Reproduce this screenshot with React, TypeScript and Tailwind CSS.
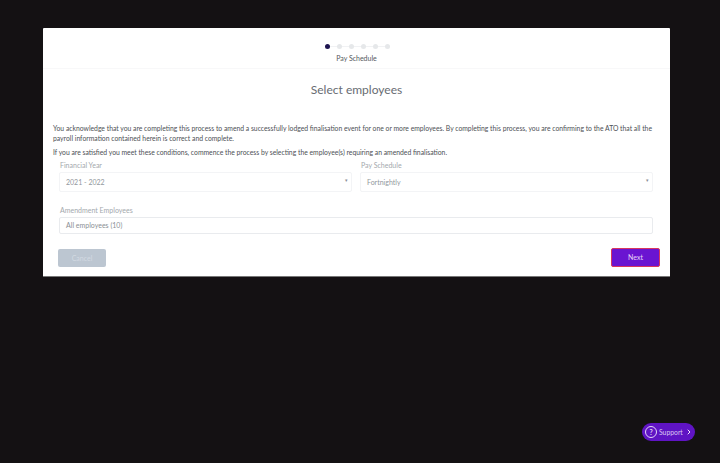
import React from "react";
import { ChevronRight } from "lucide-react";

const steps = [1, 2, 3, 4, 5, 6];

function SelectField({ label, value }: { label: string; value: string }) {
  return (
    <div className="flex-1">
      <div className="ml-[1px] text-[7px] leading-[9px] text-[#a3a8ad]">{label}</div>
      <div className="mt-[2px] flex h-[20px] items-center justify-between rounded-[2px] border border-[#f3f4f6] pl-[6px] pr-[3px] text-[7px] text-[#92979d]">
        <span>{value}</span>
        <span className="mb-[2px] text-[5px] text-[#8a9097]">▾</span>
      </div>
    </div>
  );
}

export default function App() {
  return (
    <div className="relative h-[463px] w-[720px] overflow-hidden bg-[#141113] pl-[43px] pt-[28px] font-['Lato',sans-serif]">
      <div className="h-[249px] w-[627px] rounded-[1px] border-b border-[#777] bg-white">
        {/* Stepper */}
        <div className="flex h-[41px] flex-col items-center border-b border-[#f8f8f9] pt-[16px]">
          <div className="ml-[1px] flex items-center">
            {steps.map((s, i) => (
              <React.Fragment key={s}>
                {i > 0 && <div className="h-[1px] w-[7px] bg-[#f1f2f4]" />}
                <div
                  className={
                    i === 0
                      ? "h-[5px] w-[5px] rounded-full bg-[#1d1450]"
                      : "h-[5px] w-[5px] rounded-full bg-[#e6e8ea]"
                  }
                />
              </React.Fragment>
            ))}
          </div>
          <div className="mt-[5px] text-[7px] leading-[9px] text-[#55585d]">Pay Schedule</div>
        </div>

        <h1 className="mt-[12px] text-center text-[12px] leading-[17px] text-[#686c72]">Select employees</h1>

        <div className="px-[10px] pt-[25px] text-[6.8px] leading-[10px] text-[#4d5055]">
          <p>
            You acknowledge that you are completing this process to amend a successfully lodged finalisation event for one or more employees. By completing this process, you are confirming to the ATO that all the payroll information contained herein is correct and complete.
          </p>
          <p className="mt-[4px]">
            If you are satisfied you meet these conditions, commence the process by selecting the employee(s) requiring an amended finalisation.
          </p>
        </div>

        <div className="mt-[4px] flex gap-[8px] pl-[16px] pr-[17px]">
          <SelectField label="Financial Year" value="2021 - 2022" />
          <SelectField label="Pay Schedule" value="Fortnightly" />
        </div>

        <div className="mt-[14px] pl-[16px] pr-[17px]">
          <div className="ml-[1px] text-[7px] leading-[9px] text-[#a3a8ad]">Amendment Employees</div>
          <div className="mt-[2px] flex h-[17px] items-center rounded-[2px] border border-[#e9ebee] pl-[6px] text-[7px] text-[#8a8f95]">
            All employees (10)
          </div>
        </div>

        <div className="mt-[14px] flex items-end justify-between pl-[15px] pr-[10px]">
          <button className="h-[18px] w-[48px] rounded-[2px] bg-[#bcc6d1] text-[7px] text-[#d3dae2]">Cancel</button>
          <button className="h-[19px] w-[49px] rounded-[2px] border border-[#d8365f] bg-[#6a14d1] text-[7px] text-[#e5d5f7]">Next</button>
        </div>
      </div>

      {/* Support badge */}
      <div className="absolute left-[642px] top-[423px] flex h-[18px] w-[53px] items-center rounded-full bg-[#5f14c4] pl-[3px]">
        <div className="flex h-[12px] w-[12px] items-center justify-center rounded-full border border-[#e3d4f7] text-[7px] font-bold leading-none text-[#e3d4f7]">?</div>
        <span className="ml-[2px] text-[6.8px] text-[#d9c6f3]">Support</span>
        <ChevronRight className="ml-[2px] text-[#f0e6fb]" size={8} strokeWidth={3} />
      </div>
    </div>
  );
}
